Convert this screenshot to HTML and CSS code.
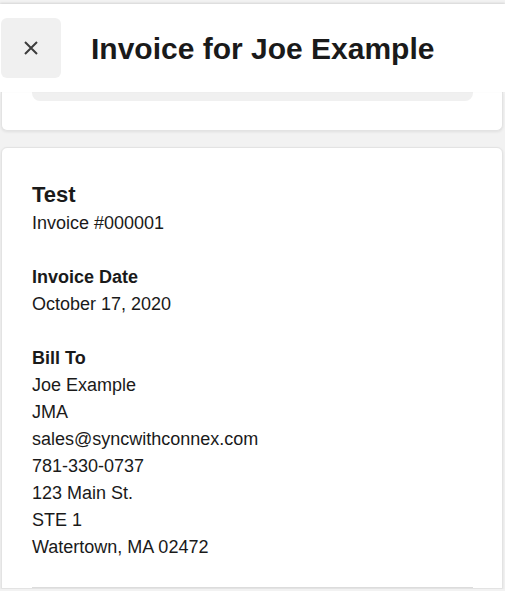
FILE: index.html
```html
<!DOCTYPE html>
<html lang="en">
<head>
    <meta charset="UTF-8">
    <meta name="viewport" content="width=device-width, initial-scale=1.0">
    <title>Invoice for Joe Example</title>
    <link rel="stylesheet" href="styles.css">
</head>
<body>
    <header class="topbar">
        <button class="close-btn" aria-label="Close">
            <svg width="14" height="14" viewBox="0 0 14 14">
                <path d="M1 1 L13 13 M13 1 L1 13" stroke="#3d3d3d" stroke-width="2" fill="none"/>
            </svg>
        </button>
        <h1 class="title">Invoice for Joe Example</h1>
    </header>

    <div class="card card-top">
        <div class="summary-bar"></div>
    </div>

    <div class="card invoice">
        <div class="block">
            <div class="invoice-name">Test</div>
            <div>Invoice #000001</div>
        </div>
        <div class="block">
            <div class="label">Invoice Date</div>
            <div>October 17, 2020</div>
        </div>
        <div class="block">
            <div class="label">Bill To</div>
            <div>Joe Example</div>
            <div>JMA</div>
            <div>sales@syncwithconnex.com</div>
            <div>781-330-0737</div>
            <div>123 Main St.</div>
            <div>STE 1</div>
            <div>Watertown, MA 02472</div>
        </div>
        <hr class="divider">
    </div>
</body>
</html>
```

FILE: styles.css
```css
body {
    margin: 0;
    background: #f2f2f2;
    font-family: "Liberation Sans", Arial, sans-serif;
    color: #1a1a1a;
    overflow: hidden;
}
.topbar {
    display: flex;
    align-items: center;
    gap: 30px;
    height: 88px;
    margin-top: 4px;
    background: #fff;
    box-shadow: 0 -1px 2px rgba(0, 0, 0, 0.12);
    position: relative;
    z-index: 1;
}
.close-btn {
    width: 60px;
    height: 60px;
    margin-left: 1px;
    border: none;
    border-radius: 6px;
    background: #f0f0f0;
    display: flex;
    align-items: center;
    justify-content: center;
    padding: 0;
    cursor: pointer;
}
.title {
    margin: 0;
    font-size: 30px;
    font-weight: bold;
    color: #1a1a1a;
    padding-top: 1px;
}
.card {
    background: #fff;
    margin: 0 2px 0 1px;
    border: 1px solid #e3e3e3;
    box-shadow: 0 1px 3px rgba(0, 0, 0, 0.08);
    padding: 0 29px 0 30px;
}
.card-top {
    border-top: none;
    border-radius: 0 0 6px 6px;
    height: 38px;
    margin-bottom: 16px;
}
.summary-bar {
    height: 9px;
    background: #f0f0f0;
    border-radius: 0 0 8px 8px;
}
.invoice {
    border-radius: 6px 6px 0 0;
    padding-top: 32px;
    font-size: 18px;
    line-height: 27px;
}
.block + .block {
    margin-top: 27px;
}
.invoice-name {
    font-size: 22px;
    font-weight: bold;
    line-height: 30px;
}
.label {
    font-weight: bold;
}
.divider {
    border: none;
    border-top: 1px solid #dcdcdc;
    margin: 26px 0 0;
}
```
